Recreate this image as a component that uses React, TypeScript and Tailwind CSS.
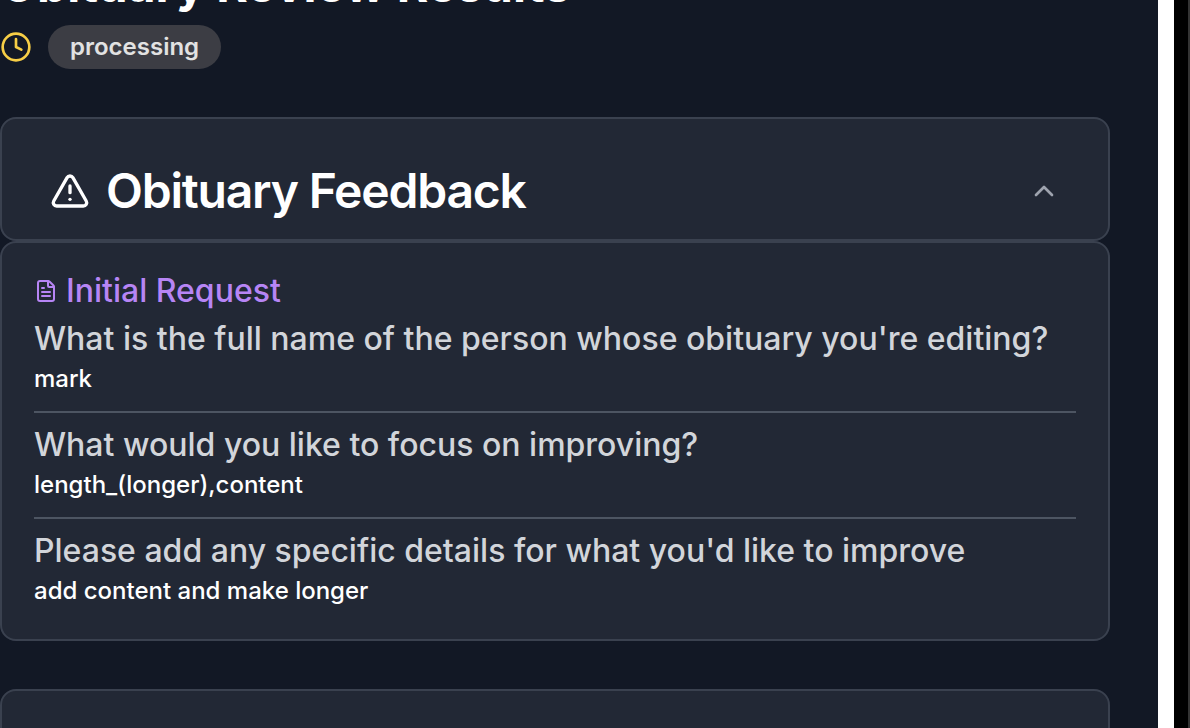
import React from 'react';
import { ChevronUp, Clock, FileText, TriangleAlert } from 'lucide-react';

const answers = [
  { question: "What is the full name of the person whose obituary you're editing?", answer: 'mark' },
  { question: 'What would you like to focus on improving?', answer: 'length_(longer),content' },
  { question: "Please add any specific details for what you'd like to improve", answer: 'add content and make longer' },
];

export default function App() {
  return (
    <div className="flex h-screen overflow-hidden bg-[#121825] font-['Inter',sans-serif] text-white">
      <main className="min-w-0 flex-1 pr-12">
        <h1 className="-mt-[39px] text-[48px] leading-[48px] font-bold">Obituary Review Results</h1>
        <div className="mt-4 flex items-center gap-4">
          <Clock className="size-8 text-[#f7ce46]" />
          <span className="rounded-full bg-[#3c3d44] px-[22px] text-[24px] leading-[44px] font-semibold text-[#e2e2e2]">
            processing
          </span>
        </div>
        <section className="mt-12">
          <header className="flex h-[124px] items-center justify-between rounded-2xl border-2 border-[#3a414f] bg-[#222835] px-12 pt-6">
            <h2 className="flex items-center gap-4 text-[48px] leading-[48px] font-semibold tracking-tight">
              <TriangleAlert className="size-10" />
              Obituary Feedback
            </h2>
            <button type="button" aria-label="Collapse feedback" className="text-[#9ea3ae]">
              <ChevronUp className="size-8" />
            </button>
          </header>
          <div className="rounded-2xl border-2 border-[#3a414f] bg-[#222835] px-8 pt-6 pb-8">
            <h3 className="flex items-center gap-2 text-[32px] leading-[48px] font-medium text-[#b785f5]">
              <FileText className="size-6" />
              Initial Request
            </h3>
            <dl className="divide-y-2 divide-[#4d5562]">
              {answers.map(({ question, answer }) => (
                <div key={question} className="pb-4 not-first:pt-2 last:pb-0">
                  <dt className="text-[32px] leading-[48px] font-medium text-[#d2d5da]">{question}</dt>
                  <dd className="text-[24px] leading-8 font-medium">{answer}</dd>
                </div>
              ))}
            </dl>
          </div>
        </section>
        <section className="mt-12 h-32 rounded-2xl border-2 border-[#3a414f] bg-[#222835]" />
      </main>
      <div className="w-4 shrink-0 bg-white" />
      <div className="w-4 shrink-0 border-r-2 border-[#333333] bg-black" />
    </div>
  );
}
